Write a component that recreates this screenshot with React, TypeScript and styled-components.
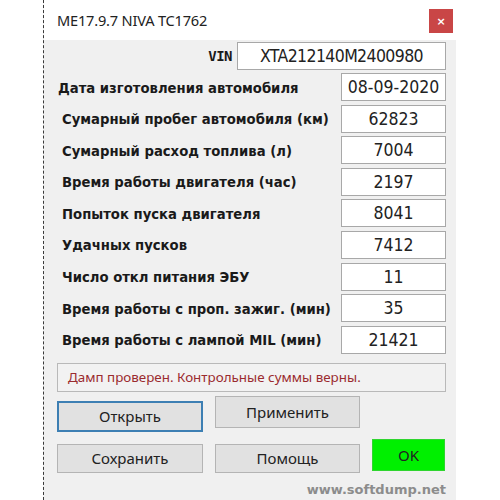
import React from "react";
import styled, { createGlobalStyle } from "styled-components";

const Global = createGlobalStyle`
  html, body { margin: 0; padding: 0; background: #ffffff; }
  body { width: 500px; height: 500px; overflow: hidden; }
`;

const Window = styled.div`
  margin-left: 43px;
  width: 412px;
  height: 500px;
  background: #f0f0f0;
  border-left: 1px dashed #3a3a3a;
  display: flex;
  flex-direction: column;
  font-family: "DejaVu Sans Condensed", "DejaVu Sans", sans-serif;
  color: #1a1a1a;
`;

const TitleBar = styled.div`
  height: 40px;
  background: #ffffff;
  display: flex;
  align-items: center;
  justify-content: space-between;
  padding: 0 3px 0 13px;
  box-sizing: border-box;
`;

const Title = styled.div`
  font-family: "Noto Sans", "Open Sans", sans-serif;
  font-size: 14.6px;
  color: #222;
  letter-spacing: -0.2px;
`;

const CloseBtn = styled.div`
  width: 24px;
  height: 24px;
  background: #c94646;
  color: #fff;
  display: flex;
  align-items: center;
  justify-content: center;
  font-family: "DejaVu Sans", sans-serif;
  font-weight: bold;
  font-size: 11px;
  margin-top: 2px;
`;

const Body = styled.div`
  padding: 2px 10px 0 13px;
  display: flex;
  flex-direction: column;
`;

const VinRow = styled.div`
  display: flex;
  justify-content: flex-end;
  align-items: center;
  gap: 5px;
`;

const VinLabel = styled.div`
  font-weight: bold;
  font-size: 14px;
  font-family: "DejaVu Sans Mono", monospace;
  letter-spacing: -0.5px;
`;

const Field = styled.div<{ $w: number; $tight?: boolean }>`
  width: ${(p) => p.$w}px;
  height: 28px;
  box-sizing: border-box;
  background: #fff;
  border: 1px solid #a8a8a8;
  display: flex;
  align-items: center;
  justify-content: center;
  font-size: 17.5px;
  letter-spacing: ${(p) => (p.$tight ? "-0.6px" : "0")};
  color: #222;
`;

const FieldList = styled.div`
  margin-top: 3px;
  display: flex;
  flex-direction: column;
  gap: 3.6px;
`;

const FieldRow = styled.div`
  display: flex;
  align-items: center;
  justify-content: space-between;
`;

const Label = styled.div<{ $indent: number }>`
  padding-left: ${(p) => p.$indent}px;
  font-weight: bold;
  font-size: 14.7px;
  color: #1a1a1a;
`;

const Status = styled.div`
  margin-top: 9px;
  height: 29px;
  box-sizing: border-box;
  border: 1px solid #b9b9b9;
  background: #f2f2f2;
  display: flex;
  align-items: center;
  padding-left: 10px;
  font-family: "Noto Sans", "Open Sans", sans-serif;
  font-size: 13.4px;
  color: #9b2b2f;
`;

const BtnRow = styled.div<{ $top: number }>`
  margin-top: ${(p) => p.$top}px;
  display: flex;
  align-items: flex-start;
  gap: 12px;
`;

const Btn = styled.div<{ $w: number; $h: number; $off?: number; $focus?: boolean; $green?: boolean }>`
  width: ${(p) => p.$w}px;
  height: ${(p) => p.$h}px;
  margin-top: ${(p) => p.$off || 0}px;
  box-sizing: border-box;
  background: ${(p) => (p.$green ? "#00f000" : "#e1e1e1")};
  border: ${(p) => (p.$focus ? "2px solid #3d7fb3" : p.$green ? "1px solid #2fd52f" : "1px solid #b4b4b4")};
  display: flex;
  align-items: center;
  justify-content: center;
  font-family: "Noto Sans", "Open Sans", sans-serif;
  font-size: 15px;
  color: #222;
`;

const Watermark = styled.div`
  margin-top: 9px;
  text-align: right;
  font-family: "DejaVu Sans", sans-serif;
  font-weight: bold;
  font-size: 13px;
  color: #8c8c8c;
`;

const rows: [string, string, number][] = [
  ["Дата изготовления автомобиля", "08-09-2020", 1],
  ["Сумарный пробег автомобиля (км)", "62823", 5],
  ["Сумарный расход топлива (л)", "7004", 5],
  ["Время работы двигателя (час)", "2197", 5],
  ["Попыток пуска двигателя", "8041", 5],
  ["Удачных пусков", "7412", 5],
  ["Число откл питания ЭБУ", "11", 5],
  ["Время работы с проп. зажиг. (мин)", "35", 5],
  ["Время работы с лампой MIL (мин)", "21421", 5],
];

export default function App() {
  return (
    <>
      <Global />
      <Window>
        <TitleBar>
          <Title>ME17.9.7 NIVA TC1762</Title>
          <CloseBtn>×</CloseBtn>
        </TitleBar>
        <Body>
          <VinRow>
            <VinLabel>VIN</VinLabel>
            <Field $w={209} $tight>XTA212140M2400980</Field>
          </VinRow>
          <FieldList>
            {rows.map(([l, v, i]) => (
              <FieldRow key={l}>
                <Label $indent={i}>{l}</Label>
                <Field $w={105}>{v}</Field>
              </FieldRow>
            ))}
          </FieldList>
          <Status>Дамп проверен. Контрольные суммы верны.</Status>
          <BtnRow $top={4}>
            <Btn $w={146} $h={31} $off={5} $focus>Открыть</Btn>
            <Btn $w={145} $h={32}>Применить</Btn>
          </BtnRow>
          <BtnRow $top={7}>
            <Btn $w={146} $h={29} $off={5}>Сохранить</Btn>
            <Btn $w={145} $h={29} $off={5}>Помощь</Btn>
            <Btn $w={73} $h={32} $green>OK</Btn>
          </BtnRow>
          <Watermark>www.softdump.net</Watermark>
        </Body>
      </Window>
    </>
  );
}
